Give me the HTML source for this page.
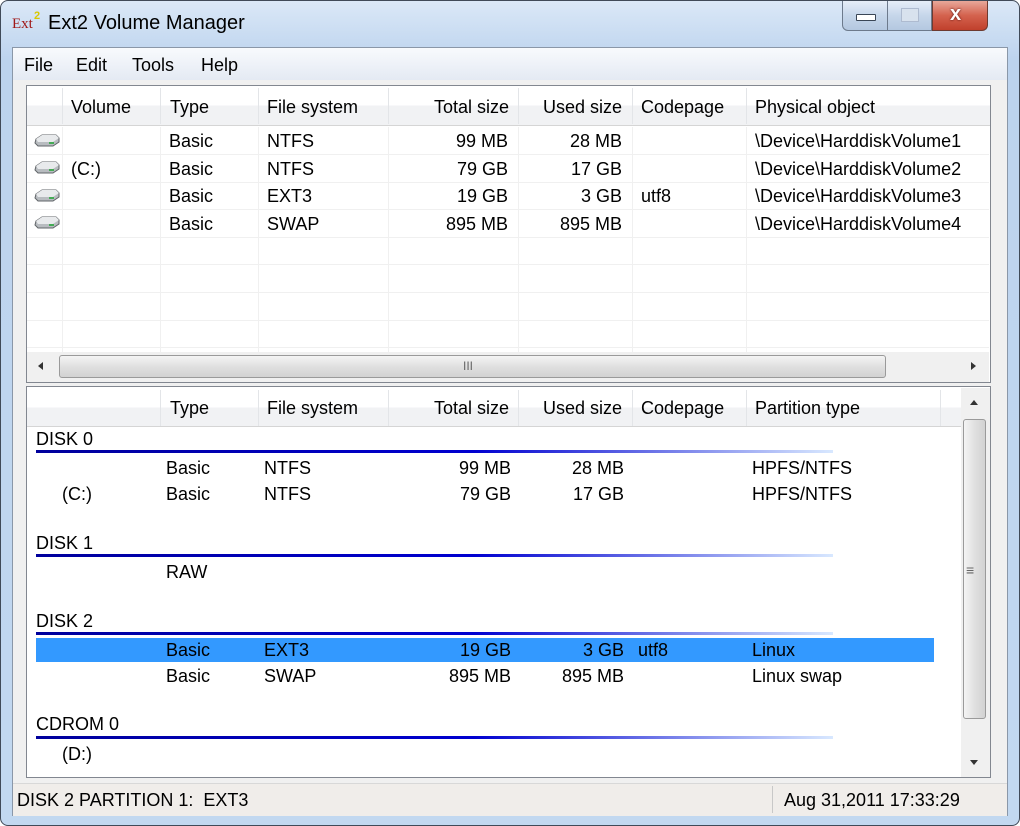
<!DOCTYPE html>
<html><head><meta charset="utf-8"><style>
*{margin:0;padding:0;box-sizing:border-box}
body{width:1020px;height:826px;background:#fff;position:relative;overflow:hidden;font-family:"Liberation Sans",sans-serif;font-size:18px;color:#000}
.a{position:absolute}
.win{left:0;top:0;width:1020px;height:826px;border:1px solid #404a58;border-radius:8px;background:linear-gradient(#dbe8f7,#bcd3ee 60px,#c2d8f0);}
.t{white-space:nowrap;line-height:20px}
.r{text-align:right}
.hdr{background:linear-gradient(#fff,#fff 50%,#f1f2f4 50%,#f1f2f4);border-bottom:1px solid #d5d5d5}
.sep{width:1px;background:#e3e5e8}
.vl{width:1px;background:#f0f0f0}
.hl{height:1px;background:#f0f0f0}
.bar{height:3px;background:linear-gradient(90deg,#00009c,#0000d0 55%,#d8e8ff)}
</style></head><body>
<div class="a win"></div>
<!-- title -->
<div class="a t" style="left:12px;top:14px;font-size:15px;color:#a01818;font-family:'Liberation Serif',serif">Ext</div>
<div class="a t" style="left:34px;top:6px;font-size:11px;color:#d8c800;font-weight:bold">2</div>
<div class="a t" style="left:48px;top:13px;font-size:20px;color:#000">Ext2 Volume Manager</div>
<!-- buttons -->
<div class="a" style="left:842px;top:1px;width:46px;height:30px;border:1px solid #6d7a8c;border-top:none;border-radius:0 0 0 6px;background:linear-gradient(#e6eef8,#c6d6ea 50%,#b4c8e0)"></div>
<div class="a" style="left:856px;top:14px;width:20px;height:7px;background:#fff;border:1px solid #3a4656;border-radius:1px"></div>
<div class="a" style="left:888px;top:1px;width:44px;height:30px;border:1px solid #6d7a8c;border-top:none;border-left:none;background:linear-gradient(#e6eef8,#c6d6ea 50%,#b4c8e0)"></div>
<div class="a" style="left:901px;top:8px;width:18px;height:14px;border:1px solid #aebbd0;background:#d8e2ee"></div>
<div class="a" style="left:932px;top:1px;width:56px;height:30px;border:1px solid #6d3a30;border-top:none;border-radius:0 0 6px 0;background:linear-gradient(#e8a89a,#d4624e 50%,#c0402c)"></div>
<div class="a t" style="left:950px;top:4px;font-size:20px;font-weight:bold;color:#fff;text-shadow:0 0 2px #400">x</div>
<!-- client -->
<div class="a" style="left:12px;top:47px;width:996px;height:769px;background:#f0f0f0;border:1px solid #8a97a8"></div>
<div class="a" style="left:13px;top:48px;width:994px;height:32px;background:linear-gradient(#f8fafd,#e4eaf3)"></div>
<div class="a t" style="left:24px;top:55px">File</div>
<div class="a t" style="left:76px;top:55px">Edit</div>
<div class="a t" style="left:132px;top:55px">Tools</div>
<div class="a t" style="left:201px;top:55px">Help</div>
<!-- top list -->
<div class="a" style="left:26px;top:85px;width:965px;height:298px;background:#fff;border:1px solid #828790"></div>
<div class="a hdr" style="left:27px;top:86px;width:963px;height:40px"></div>
<div class="a sep" style="left:62px;top:88px;height:36px"></div>
<div class="a sep" style="left:160px;top:88px;height:36px"></div>
<div class="a sep" style="left:258px;top:88px;height:36px"></div>
<div class="a sep" style="left:388px;top:88px;height:36px"></div>
<div class="a sep" style="left:518px;top:88px;height:36px"></div>
<div class="a sep" style="left:632px;top:88px;height:36px"></div>
<div class="a sep" style="left:746px;top:88px;height:36px"></div>
<div class="a t" style="left:71px;top:97px">Volume</div>
<div class="a t" style="left:170px;top:97px">Type</div>
<div class="a t" style="left:267px;top:97px">File system</div>
<div class="a t r" style="left:388px;width:121px;top:97px">Total size</div>
<div class="a t r" style="left:518px;width:104px;top:97px">Used size</div>
<div class="a t" style="left:641px;top:97px">Codepage</div>
<div class="a t" style="left:755px;top:97px">Physical object</div>
<!-- grid -->
<div class="a vl" style="left:62px;top:127px;height:225px"></div>
<div class="a vl" style="left:160px;top:127px;height:225px"></div>
<div class="a vl" style="left:258px;top:127px;height:225px"></div>
<div class="a vl" style="left:388px;top:127px;height:225px"></div>
<div class="a vl" style="left:518px;top:127px;height:225px"></div>
<div class="a vl" style="left:632px;top:127px;height:225px"></div>
<div class="a vl" style="left:746px;top:127px;height:225px"></div>
<div class="a hl" style="left:27px;top:154px;width:962px"></div>
<div class="a hl" style="left:27px;top:182px;width:962px"></div>
<div class="a hl" style="left:27px;top:209px;width:962px"></div>
<div class="a hl" style="left:27px;top:237px;width:962px"></div>
<div class="a hl" style="left:27px;top:264px;width:962px"></div>
<div class="a hl" style="left:27px;top:292px;width:962px"></div>
<div class="a hl" style="left:27px;top:320px;width:962px"></div>
<div class="a hl" style="left:27px;top:347px;width:962px"></div>
<!-- drive icons -->
<svg class="a" style="left:34px;top:133px" width="26" height="100" viewBox="0 0 26 100">
<g id="d"><path d="M2 6 L8 2 H22 L25 5 V9 L19 13 H4 L1 10 Z" fill="#b8bcc0" stroke="#606468" stroke-width="1"/><path d="M2 6 L8 2 H22 L25 5 L19 9 H4 Z" fill="#e8eaec"/><rect x="15" y="9" width="5" height="2" fill="#4a5"/></g>
<use href="#d" y="27"/><use href="#d" y="55"/><use href="#d" y="82"/>
</svg>
<div class="a t" style="left:71px;top:159px">(C:)</div>
<div class="a t" style="left:169px;top:131px">Basic</div><div class="a t" style="left:267px;top:131px">NTFS</div><div class="a t r" style="left:388px;width:120px;top:131px">99 MB</div><div class="a t r" style="left:518px;width:104px;top:131px">28 MB</div><div class="a t" style="left:755px;top:131px">\Device\HarddiskVolume1</div>
<div class="a t" style="left:169px;top:159px">Basic</div><div class="a t" style="left:267px;top:159px">NTFS</div><div class="a t r" style="left:388px;width:120px;top:159px">79 GB</div><div class="a t r" style="left:518px;width:104px;top:159px">17 GB</div><div class="a t" style="left:755px;top:159px">\Device\HarddiskVolume2</div>
<div class="a t" style="left:169px;top:186px">Basic</div><div class="a t" style="left:267px;top:186px">EXT3</div><div class="a t r" style="left:388px;width:120px;top:186px">19 GB</div><div class="a t r" style="left:518px;width:104px;top:186px">3 GB</div><div class="a t" style="left:641px;top:186px">utf8</div><div class="a t" style="left:755px;top:186px">\Device\HarddiskVolume3</div>
<div class="a t" style="left:169px;top:214px">Basic</div><div class="a t" style="left:267px;top:214px">SWAP</div><div class="a t r" style="left:388px;width:120px;top:214px">895 MB</div><div class="a t r" style="left:518px;width:104px;top:214px">895 MB</div><div class="a t" style="left:755px;top:214px">\Device\HarddiskVolume4</div>
<!-- hscroll -->
<div class="a" style="left:27px;top:352px;width:962px;height:30px;background:#f0f0f0"></div>
<div class="a" style="left:59px;top:355px;width:827px;height:23px;border:1px solid #9a9a9a;border-radius:3px;background:linear-gradient(#f4f4f4,#e0e0e0 50%,#d2d2d2)"></div>
<div class="a t" style="left:463px;top:356px;font-size:12px;color:#666">III</div>
<div class="a" style="left:38px;top:362px;width:0;height:0;border-top:4px solid transparent;border-bottom:4px solid transparent;border-right:5px solid #333"></div>
<div class="a" style="left:971px;top:362px;width:0;height:0;border-top:4px solid transparent;border-bottom:4px solid transparent;border-left:5px solid #333"></div>
<!-- bottom list -->
<div class="a" style="left:26px;top:386px;width:965px;height:392px;background:#fff;border:1px solid #828790"></div>
<div class="a hdr" style="left:27px;top:389px;width:934px;height:38px"></div>
<div class="a sep" style="left:160px;top:390px;height:36px"></div>
<div class="a sep" style="left:258px;top:390px;height:36px"></div>
<div class="a sep" style="left:388px;top:390px;height:36px"></div>
<div class="a sep" style="left:518px;top:390px;height:36px"></div>
<div class="a sep" style="left:632px;top:390px;height:36px"></div>
<div class="a sep" style="left:746px;top:390px;height:36px"></div>
<div class="a sep" style="left:940px;top:390px;height:36px"></div>
<div class="a t" style="left:170px;top:398px">Type</div>
<div class="a t" style="left:267px;top:398px">File system</div>
<div class="a t r" style="left:388px;width:121px;top:398px">Total size</div>
<div class="a t r" style="left:518px;width:104px;top:398px">Used size</div>
<div class="a t" style="left:641px;top:398px">Codepage</div>
<div class="a t" style="left:755px;top:398px">Partition type</div>
<!-- vscroll -->
<div class="a" style="left:961px;top:388px;width:29px;height:389px;background:#f0f0f0"></div>
<div class="a" style="left:963px;top:419px;width:23px;height:300px;border:1px solid #9a9a9a;border-radius:3px;background:linear-gradient(90deg,#f4f4f4,#e0e0e0 50%,#d2d2d2)"></div>
<div class="a t" style="left:966px;top:560px;font-size:14px;color:#666">≡</div>
<div class="a" style="left:970px;top:400px;border-left:4px solid transparent;border-right:4px solid transparent;border-bottom:5px solid #333"></div>
<div class="a" style="left:970px;top:760px;border-left:4px solid transparent;border-right:4px solid transparent;border-top:5px solid #333"></div>
<!-- disks -->
<div class="a t" style="left:36px;top:429px">DISK 0</div>
<div class="a bar" style="left:36px;top:450px;width:797px"></div>
<div class="a t" style="left:166px;top:458px">Basic</div><div class="a t" style="left:264px;top:458px">NTFS</div><div class="a t r" style="left:388px;width:123px;top:458px">99 MB</div><div class="a t r" style="left:518px;width:106px;top:458px">28 MB</div><div class="a t" style="left:752px;top:458px">HPFS/NTFS</div>
<div class="a t" style="left:62px;top:484px">(C:)</div>
<div class="a t" style="left:166px;top:484px">Basic</div><div class="a t" style="left:264px;top:484px">NTFS</div><div class="a t r" style="left:388px;width:123px;top:484px">79 GB</div><div class="a t r" style="left:518px;width:106px;top:484px">17 GB</div><div class="a t" style="left:752px;top:484px">HPFS/NTFS</div>
<div class="a t" style="left:36px;top:533px">DISK 1</div>
<div class="a bar" style="left:36px;top:554px;width:797px"></div>
<div class="a t" style="left:166px;top:562px">RAW</div>
<div class="a t" style="left:36px;top:611px">DISK 2</div>
<div class="a bar" style="left:36px;top:632px;width:797px"></div>
<div class="a" style="left:36px;top:638px;width:898px;height:24px;background:#3399ff"></div>
<div class="a t" style="left:166px;top:640px">Basic</div><div class="a t" style="left:264px;top:640px">EXT3</div><div class="a t r" style="left:388px;width:123px;top:640px">19 GB</div><div class="a t r" style="left:518px;width:106px;top:640px">3 GB</div><div class="a t" style="left:638px;top:640px">utf8</div><div class="a t" style="left:752px;top:640px">Linux</div>
<div class="a t" style="left:166px;top:666px">Basic</div><div class="a t" style="left:264px;top:666px">SWAP</div><div class="a t r" style="left:388px;width:123px;top:666px">895 MB</div><div class="a t r" style="left:518px;width:106px;top:666px">895 MB</div><div class="a t" style="left:752px;top:666px">Linux swap</div>
<div class="a t" style="left:36px;top:714px">CDROM 0</div>
<div class="a bar" style="left:36px;top:736px;width:797px"></div>
<div class="a t" style="left:62px;top:744px">(D:)</div>
<!-- status -->
<div class="a" style="left:13px;top:783px;width:994px;height:33px;background:#f0edea;border-top:1px solid #d8d8d8"></div>
<div class="a" style="left:772px;top:786px;width:1px;height:27px;background:#c8c8c8"></div>
<div class="a t" style="left:17px;top:790px">DISK 2 PARTITION 1:&nbsp; EXT3</div>
<div class="a t" style="left:784px;top:790px">Aug 31,2011 17:33:29</div>
</body></html>
